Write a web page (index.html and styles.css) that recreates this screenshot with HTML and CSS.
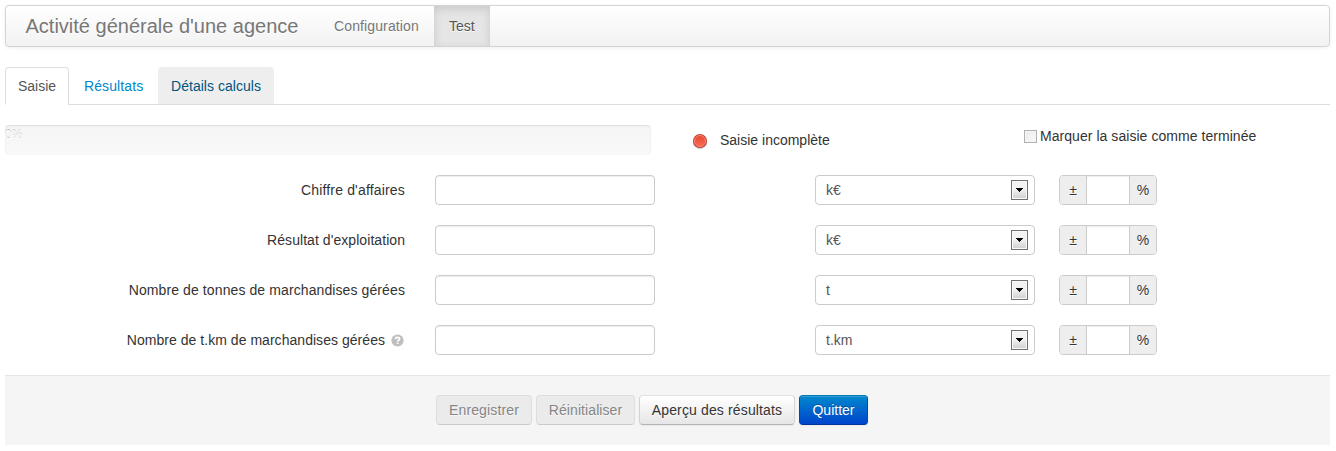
FILE: index.html
```html
<!DOCTYPE html>
<html lang="fr">
<head>
<meta charset="utf-8">
<title>Activité générale d'une agence</title>
<link rel="stylesheet" href="styles.css">
</head>
<body>
<header class="navbar">
  <a class="brand">Activité générale d'une agence</a>
  <nav class="nav">
    <a class="nav-link nav-config">Configuration</a>
    <a class="nav-link nav-link-active">Test</a>
  </nav>
</header>
<ul class="tabs">
  <li class="tab tab-active">Saisie</li>
  <li class="tab tab-results">Résultats</li>
  <li class="tab tab-hover">Détails calculs</li>
</ul>
<main>
  <section class="status-row">
    <div class="progress"><span class="progress-text">0%</span></div>
    <div class="status">
      <svg class="status-icon" width="16" height="17" viewBox="0 0 16 17">
        <defs><linearGradient id="red" x1="0" y1="0" x2="0" y2="1"><stop offset="0" stop-color="#e8492f"/><stop offset="1" stop-color="#fb6a55"/></linearGradient></defs>
        <circle cx="8" cy="9" r="7.2" fill="#000" opacity=".2"/>
        <circle cx="8" cy="8" r="7" fill="#c5402f"/>
        <circle cx="8" cy="8" r="5.500" fill="url(#red)" stroke="#fa8a78" stroke-width="1"/>
      </svg>
      <span>Saisie incomplète</span>
    </div>
    <label class="finish"><span class="checkbox"></span><span class="finish-text">Marquer la saisie comme terminée</span></label>
  </section>
  <form class="form">
    <div class="row">
      <label class="label label-revenue">Chiffre d'affaires</label>
      <div class="field"></div>
      <div class="select"><span>k€</span><span class="arrow"><svg width="7" height="4" viewBox="0 0 7 4"><path d="M0 0h7v1H6v1H5v1H4v1H3V3H2V2H1V1H0z"/></svg></span></div>
      <div class="group"><span class="addon">±</span><span class="group-field"></span><span class="addon addon-end">%</span></div>
    </div>
    <div class="row">
      <label class="label">Résultat d'exploitation</label>
      <div class="field"></div>
      <div class="select"><span>k€</span><span class="arrow"><svg width="7" height="4" viewBox="0 0 7 4"><path d="M0 0h7v1H6v1H5v1H4v1H3V3H2V2H1V1H0z"/></svg></span></div>
      <div class="group"><span class="addon">±</span><span class="group-field"></span><span class="addon addon-end">%</span></div>
    </div>
    <div class="row">
      <label class="label label-tonnes">Nombre de tonnes de marchandises gérées</label>
      <div class="field"></div>
      <div class="select"><span>t</span><span class="arrow"><svg width="7" height="4" viewBox="0 0 7 4"><path d="M0 0h7v1H6v1H5v1H4v1H3V3H2V2H1V1H0z"/></svg></span></div>
      <div class="group"><span class="addon">±</span><span class="group-field"></span><span class="addon addon-end">%</span></div>
    </div>
    <div class="row">
      <label class="label label-help"><span>Nombre de t.km de marchandises gérées</span>
        <svg class="help" width="13" height="13" viewBox="0 0 13 13"><circle cx="6.5" cy="6.5" r="6.1" fill="#bfbfbf"/><path d="M4.400 5.100C4.500 3.800 5.300 3.300 6.500 3.300c1.200 0 2.100.6 2.100 1.600 0 1.400-1.900 1.300-1.900 2.600" fill="none" stroke="#fff" stroke-width="1.700"/><path d="M5.800 8.500h1.700v1.500H5.800z" fill="#fff"/></svg>
      </label>
      <div class="field"></div>
      <div class="select"><span>t.km</span><span class="arrow"><svg width="7" height="4" viewBox="0 0 7 4"><path d="M0 0h7v1H6v1H5v1H4v1H3V3H2V2H1V1H0z"/></svg></span></div>
      <div class="group"><span class="addon">±</span><span class="group-field"></span><span class="addon addon-end">%</span></div>
    </div>
  </form>
</main>
<footer class="actions">
  <button class="btn btn-disabled btn-save">Enregistrer</button>
  <button class="btn btn-disabled btn-reset">Réinitialiser</button>
  <button class="btn btn-preview">Aperçu des résultats</button>
  <button class="btn btn-primary">Quitter</button>
</footer>
</body>
</html>
```
FILE: styles.css
```css
* { box-sizing: border-box; }
body {
  margin: 0;
  padding: 5px 6px 0 5px;
  background: #fff;
  color: #333;
  font: 14px/20px "Liberation Sans", Arial, sans-serif;
}
.navbar {
  display: flex;
  height: 42px;
  border: 1px solid #d4d4d4;
  border-radius: 4px;
  background: linear-gradient(#fff, #f2f2f2);
  box-shadow: 0 1px 4px rgba(0, 0, 0, .065);
  color: #777;
  text-shadow: 0 1px 0 #fff;
}
.brand {
  width: 308px;
  padding: 10px 0 10px 19.5px;
  font-size: 20px;
  white-space: nowrap;
}
.nav { display: flex; }
.nav-link { width: 120px; padding: 10px 0 10px 20px; }
.nav-config { letter-spacing: .12px; }
.nav-link-active {
  width: 56px;
  padding-left: 15px;
  background: #e5e5e5;
  box-shadow: inset 0 3px 8px rgba(0, 0, 0, .125);
  color: #555;
}
.tabs {
  display: flex;
  height: 38px;
  margin: 20px 0;
  padding: 0;
  border-bottom: 1px solid #ddd;
  list-style: none;
}
.tab {
  height: 37px;
  padding: 9px 0 8px 13px;
  border-radius: 4px 4px 0 0;
  color: #08c;
  white-space: nowrap;
}
.tab-active {
  width: 64px;
  height: 38px;
  padding: 8px 0 8px 12px;
  border: 1px solid #ddd;
  border-bottom-color: transparent;
  background: #fff;
  color: #555;
}
.tab-results { width: 89px; padding-left: 15px; letter-spacing: .1px; }
.tab-hover { width: 116px; background: #eee; color: #005580; letter-spacing: .03px; }
.status-row {
  display: grid;
  grid-template-columns: 646px 372px 1fr;
  height: 30px;
  margin-bottom: 20px;
}
.progress {
  border-radius: 4px;
  background: linear-gradient(#f5f5f5, #f9f9f9);
  box-shadow: inset 0 1px 2px rgba(0, 0, 0, .1);
}
.progress-text {
  display: block;
  color: #fff;
  font-size: 12px;
  line-height: 20px;
  text-shadow: 0 -1px 0 rgba(0, 0, 0, .25);
}
.status {
  display: flex;
  gap: 12px;
  padding: 5px 0 0 41px;
}
.status-icon { margin-top: 3px; }
.finish { display: flex; gap: 3px; padding: 1px 0 0 1px; }
.finish-text { letter-spacing: .05px; }
.checkbox {
  width: 13px;
  height: 13px;
  margin-top: 4px;
  border: 1px solid #b1b1b1;
  background: linear-gradient(135deg, #eaeaea, #fbfbfb);
  box-shadow: inset 0 0 0 1px #f5f5f5;
}
.form { display: grid; gap: 20px; }
.row {
  display: grid;
  grid-template-columns: 400px 30px 220px 160px 220px 24px 98px;
  height: 30px;
}
.label {
  display: flex;
  justify-content: flex-end;
  gap: 6px;
  padding-top: 5px;
  letter-spacing: .06px;
  white-space: nowrap;
}
.label-revenue { letter-spacing: .17px; }
.label-tonnes { letter-spacing: .1px; }
.label-help { padding-right: 1px; letter-spacing: .04px; }
.help { margin-top: 4px; }
.field { grid-column: 3; }
.select { grid-column: 5; }
.group { grid-column: 7; }
.field, .select {
  border: 1px solid #ccc;
  border-radius: 4px;
}
.field { box-shadow: inset 0 1px 1px rgba(0, 0, 0, .075); }
.select {
  display: flex;
  justify-content: space-between;
  padding: 4px 6px 4px 10px;
  color: #555;
}
.arrow {
  display: flex;
  align-items: center;
  justify-content: center;
  width: 17px;
  height: 20px;
  border: 1px solid #707070;
  background: linear-gradient(#f2f2f2 45%, #cfcfcf);
  box-shadow: inset 0 0 0 1px #fafafa;
}
.group {
  display: grid;
  grid-template-columns: 27px 1fr 26px;
  overflow: hidden;
  border: 1px solid #ccc;
  border-radius: 4px;
}
.addon {
  padding-top: 4px;
  border-right: 1px solid #ccc;
  background: #eee;
  text-align: center;
  text-shadow: 0 1px 0 #fff;
}
.addon-end { border-right: 0; }
.group-field {
  border-right: 1px solid #ccc;
  box-shadow: inset 0 1px 1px rgba(0, 0, 0, .075);
}
.actions {
  display: flex;
  gap: 4px;
  height: 70px;
  margin-top: 20px;
  padding: 19px 0 0 431px;
  border-top: 1px solid #e5e5e5;
  background: #f5f5f5;
}
.btn {
  height: 30px;
  padding: 0;
  border: 1px solid #ccc;
  border-color: #e0e0e0 #d4d4d4 #b3b3b3;
  border-radius: 4px;
  background: linear-gradient(#fff, #e6e6e6);
  box-shadow: inset 0 1px 0 rgba(255, 255, 255, .2), 0 1px 2px rgba(0, 0, 0, .05);
  color: #333;
  font: inherit;
  text-shadow: 0 1px 1px rgba(255, 255, 255, .75);
  white-space: nowrap;
}
.btn-disabled {
  border-color: #dedede #dedede #cbcbcb;
  background: #ebebeb;
  box-shadow: none;
  color: #858585;
}
.btn-save { width: 96px; letter-spacing: .14px; }
.btn-reset { width: 99px; letter-spacing: .08px; }
.btn-preview { width: 156px; letter-spacing: .14px; }
.btn-primary {
  width: 69px;
  border-color: #0477b5 #0444b3 #003399;
  background: linear-gradient(#08c, #04c);
  color: #fff;
  text-shadow: 0 -1px 0 rgba(0, 0, 0, .25);
}
```
